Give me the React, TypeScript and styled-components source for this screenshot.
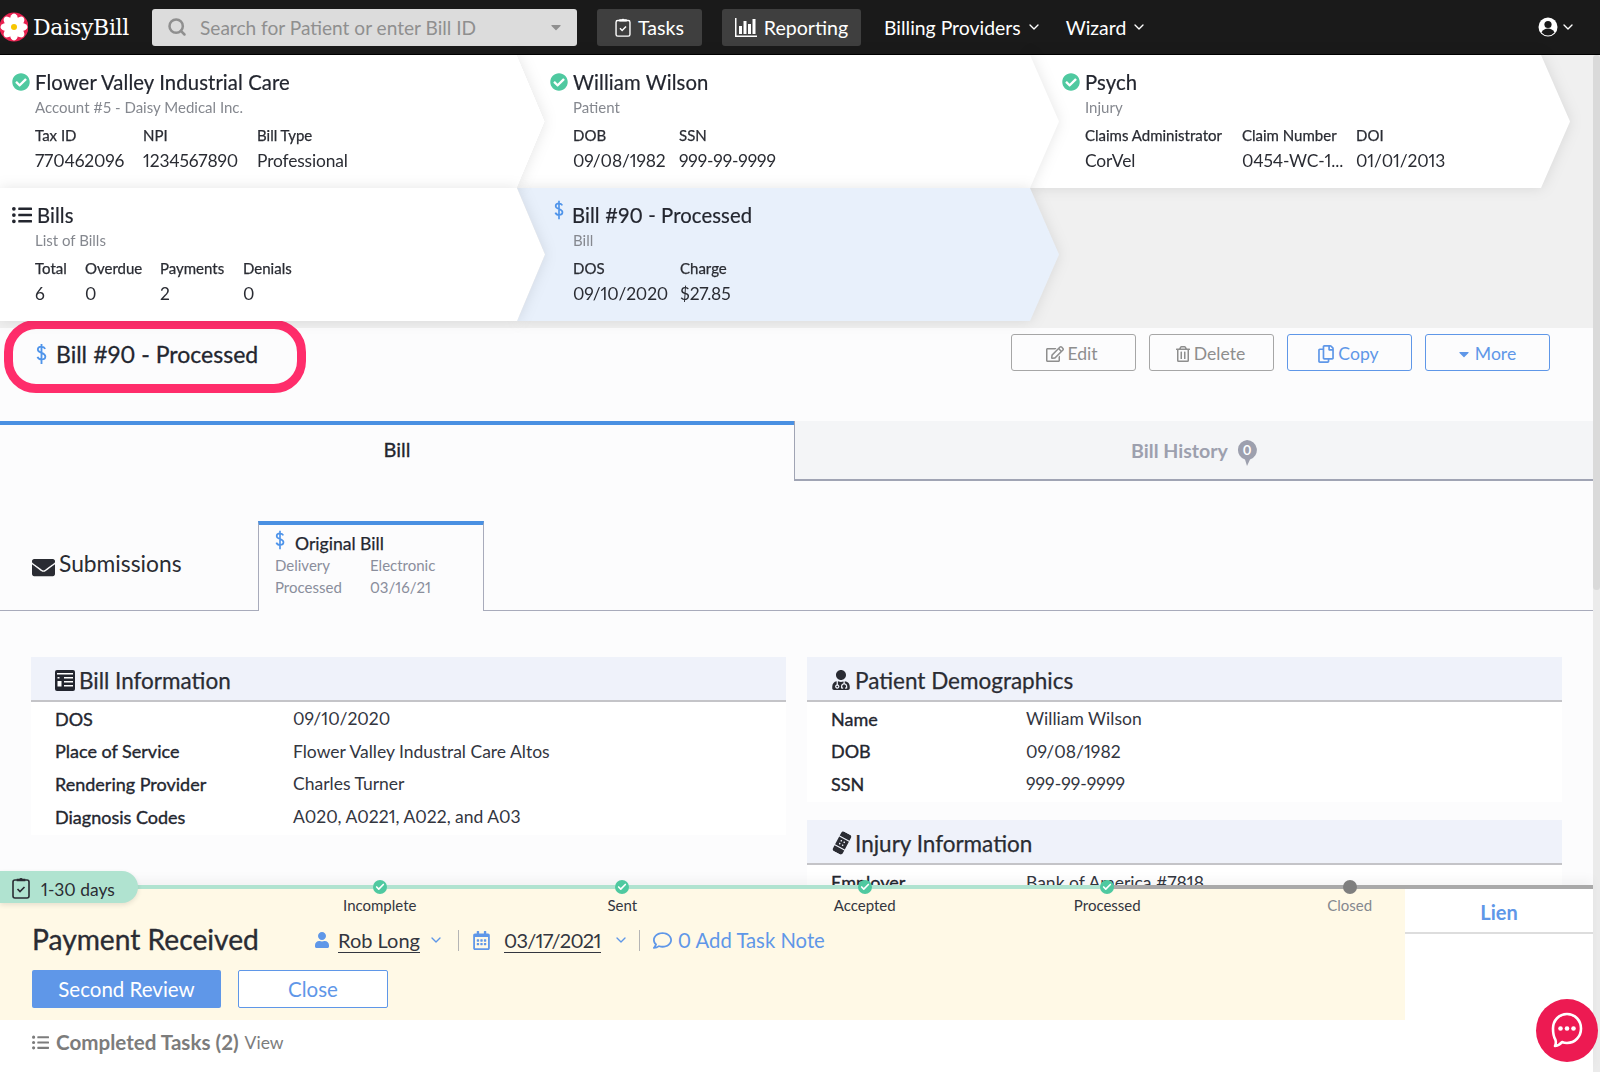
import React from "react";
import styled, { createGlobalStyle } from "styled-components";
import { Search, ChevronDown, Check } from "lucide-react";
import {
  FaCheckCircle, FaListUl, FaEnvelope, FaRegEdit, FaRegTrashAlt, FaRegCopy, FaCaretDown,
  FaUserMd, FaBandAid, FaUser, FaRegCalendarAlt, FaRegComment,
} from "react-icons/fa";

const Global = createGlobalStyle`
  html, body { margin: 0; padding: 0; background: #fcfcfd; }
  * { box-sizing: border-box; }
  body { font-family: "Lato", "Liberation Sans", sans-serif; color: #23262f; font-variant-numeric: proportional-nums; }
`;

const Page = styled.div`
  position: relative; width: 1600px; height: 1072px; overflow: hidden; background: #fcfcfd;
`;
const TopBar = styled.header`
  height: 55px; background: #1a1a1a; border-bottom: 1px solid #000; display: flex; align-items: center; color: #fff;
`;
const Brand = styled.div`
  display: flex; align-items: center; gap: 5px; width: 152px; flex: none;
  font-family: "DejaVu Serif", serif; font-size: 22px; letter-spacing: -0.3px;
`;
const SearchBox = styled.div`
  width: 425px; height: 37px; background: #dcdcdc; border-radius: 3px; display: flex; align-items: center;
  padding: 0 13px 0 15px; color: #8f8f8f; font-size: 19.1px; gap: 13px; flex: none;
`;
const Grow = styled.span` flex: 1; `;
const NavButton = styled.div<{ $w: number; $ml: number }>`
  width: ${(p) => p.$w}px; margin-left: ${(p) => p.$ml}px; height: 37px; background: #3f3f3f; border-radius: 3px; flex: none;
  display: flex; align-items: center; justify-content: center; gap: 7px; font-size: 19.6px;
`;
const NavLink = styled.div<{ $ml: number }>`
  margin-left: ${(p) => p.$ml}px; display: flex; align-items: center; gap: 5px; font-size: 19.4px; flex: none;
`;
const UserMenu = styled.div`
  margin-left: auto; margin-right: 24px; display: flex; align-items: center; gap: 2px;
`;

const Crumbs = styled.section`
  background: #f0f0f0; height: 273px; padding-bottom: 7px; display: flex; flex-direction: column;
`;
const CrumbRow = styled.div` display: flex; height: 133px; `;
const CrumbShadow = styled.div<{ $w: number; $ml: number; $z: number }>`
  width: ${(p) => p.$w}px; margin-left: ${(p) => p.$ml}px; flex: none; height: 100%; position: relative; z-index: ${(p) => p.$z};
  filter: drop-shadow(0 0 7px rgba(0, 0, 0, 0.1));
`;
const Crumb = styled.div<{ $first?: boolean; $active?: boolean }>`
  height: 100%; background: ${(p) => (p.$active ? "#e8f0fb" : "#fff")};
  clip-path: ${(p) =>
    p.$first
      ? "polygon(0 0, calc(100% - 28px) 0, 100% 50%, calc(100% - 28px) 100%, 0 100%)"
      : "polygon(0 0, calc(100% - 29px) 0, 100% 50%, calc(100% - 29px) 100%, 0 100%, 28px 50%)"};
  padding: 15px 0 0 ${(p) => (p.$first ? 12 : 33)}px;
`;
const CrumbTitle = styled.div`
  display: flex; align-items: center; height: 24px; font-size: 20.3px; gap: 5px; letter-spacing: 0.1px; color: #23262f;
  -webkit-text-stroke: 0.2px #23262f;
`;
const RaisedDollar = styled.span`
  display: flex; margin: -10px 3px 0 4px;
`;
const CrumbSub = styled.div`
  margin: 4px 0 0 23px; font-size: 15px; color: #85888f; line-height: 18px;
`;
const Facts = styled.div<{ $cols: string }>`
  margin: 10px 0 0 23px; display: grid; grid-template-columns: ${(p) => p.$cols};
`;
const FactLabel = styled.div`
  font-size: 15px; line-height: 19px; color: #2a2c33; -webkit-text-stroke: 0.25px #2a2c33;
`;
const FactValue = styled.div`
  font-size: 17.4px; line-height: 22px; margin-top: 5px; color: #2a2c33; white-space: nowrap; letter-spacing: -0.15px;
`;

const TitleBar = styled.div`
  position: relative; height: 93px; display: flex; justify-content: space-between; padding-right: 50px;
`;
const Ring = styled.div`
  position: absolute; left: 4px; top: -8px; width: 302px; height: 73px; border: 9px solid #ff2d6b; border-radius: 32px;
`;
const PageTitle = styled.h1`
  margin: 10px 0 0 36px; display: flex; align-items: center; gap: 9px; font-size: 23px; font-weight: 400; line-height: 32px; height: 32px;
  -webkit-text-stroke: 0.3px #23262f;
`;
const Actions = styled.div` display: flex; gap: 13px; padding-top: 6px; `;
const Action = styled.button<{ $blue?: boolean }>`
  width: 125px; height: 37px; background: transparent; border-radius: 3px; font: inherit; font-size: 17.6px;
  border: 1.5px solid ${(p) => (p.$blue ? "#5f97e8" : "#a6a6a6")}; color: ${(p) => (p.$blue ? "#5f97e8" : "#8e8e8e")};
  display: flex; align-items: center; justify-content: center; gap: 3px; padding: 2px 3px 0 0;
`;

const MainTabs = styled.div`
  display: grid; grid-template-columns: 794px 1fr; height: 60px; padding-right: 7px;
`;
const MainTab = styled.div<{ $active?: boolean }>`
  display: flex; align-items: center; justify-content: center; gap: 9px; font-size: ${(p) => (p.$active ? 20 : 19.6)}px;
  font-weight: ${(p) => (p.$active ? 400 : 700)};
  -webkit-text-stroke: ${(p) => (p.$active ? "0.3px #23262f" : "0")};
  color: ${(p) => (p.$active ? "#23262f" : "#9da0ae")};
  background: ${(p) => (p.$active ? "transparent" : "#f4f5f7")};
  border-top: ${(p) => (p.$active ? "4px solid #4a90e2" : "none")};
  border-bottom: ${(p) => (p.$active ? "none" : "2px solid #a0a4b4")};
  border-left: ${(p) => (p.$active ? "none" : "1px solid #a0a4b4")};
  padding-bottom: ${(p) => (p.$active ? 8 : 0)}px;
`;
const PinWrap = styled.span` display: flex; margin-top: 6px; `;

const SubTabs = styled.div`
  margin-top: 40px; height: 90px; border-bottom: 1px solid #a8abbb; display: flex; align-items: flex-end; margin-right: 7px;
`;
const Submissions = styled.div`
  width: 258px; height: 100%; display: flex; align-items: center; padding: 3px 0 0 32px; gap: 4px; font-size: 22.8px; color: #2a2c33;
`;
const SubmissionsText = styled.span` margin-top: -8px; `;
const SubTabCard = styled.div`
  width: 226px; height: 90px; margin-bottom: -1px; background: #fcfcfd; border-top: 4px solid #4a90e2; border-left: 1px solid #a8abbb;
  border-right: 1px solid #a8abbb; padding: 4px 0 0 16px;
`;
const CardTitle = styled.div`
  display: flex; align-items: center; gap: 10px; font-size: 17.6px; height: 25px; padding-top: 4px; -webkit-text-stroke: 0.25px #23262f;
`;
const CardDollar = styled.span` display: flex; margin-top: -7px; `;
const CardGrid = styled.div`
  display: grid; grid-template-columns: 95px 1fr; font-size: 15px; line-height: 22px; color: #8a8e9c;
`;

const Panels = styled.div`
  margin: 46px 38px 0 31px; display: grid; grid-template-columns: 755px 755px; gap: 21px;
`;
const Column = styled.div` display: flex; flex-direction: column; gap: 18px; `;
const Panel = styled.div` background: #fff; padding-bottom: 2px; `;
const PanelHead = styled.h2`
  margin: 0; height: 45px; background: #eff2fa; border-bottom: 2px solid #c4c4c8; display: flex; align-items: center; gap: 4px;
  padding: 3px 0 0 24px; font-size: 22.5px; font-weight: 400; color: #2a2c33; -webkit-text-stroke: 0.25px #2a2c33;
`;
const BandAidIcon = styled(FaBandAid)` transform: rotate(-62deg); margin-right: -2px; `;
const Rows = styled.div` padding-top: 0.5px; `;
const Row = styled.div<{ $label: number }>`
  display: grid; grid-template-columns: ${(p) => p.$label}px 1fr; height: 32.6px; align-items: center; padding-left: 24px; font-size: 17.5px; color: #33363f;
`;
const RowLabel = styled.span` font-size: 18px; color: #23262f; -webkit-text-stroke: 0.35px #23262f; `;

const Footer = styled.footer`
  position: absolute; left: 0; top: 885px; width: 1593px; height: 187px; background: #fff; box-shadow: 0 -6px 10px rgba(0,0,0,0.04);
`;
const Track = styled.div`
  height: 4px; background: linear-gradient(to right, #b0e3d0 0, #b0e3d0 1108px, #a9a9a9 1108px, #a9a9a9 100%);
`;
const Pill = styled.div`
  position: absolute; left: 0; top: -14px; width: 138px; height: 32px; background: #b0e3d0; border-radius: 0 16px 16px 0; display: flex; align-items: center;
  padding-left: 12px; gap: 11px; font-size: 17.4px; box-shadow: 0 2px 5px rgba(0,0,0,0.1); color: #2a2c33;
`;
const PillText = styled.span` margin-top: 4px; `;
const Steps = styled.div`
  position: absolute; left: 258.5px; top: -5px; display: flex;
`;
const Step = styled.div<{ $muted?: boolean }>`
  width: 242.5px; display: flex; flex-direction: column; align-items: center; gap: 2px; font-size: 15px; line-height: 18px;
  color: ${(p) => (p.$muted ? "#85888f" : "#33363f")};
`;
const Dot = styled.span<{ $grey?: boolean }>`
  width: 14px; height: 14px; border-radius: 50%; background: ${(p) => (p.$grey ? "#7f7f7f" : "#4fc9a0")}; display: flex; align-items: center; justify-content: center; color: #fff;
`;
const FooterBody = styled.div`
  display: grid; grid-template-columns: 1405px 1fr; height: 131px;
`;
const TaskPanel = styled.div`
  background: #fff9e6; padding: 35px 0 0 32px;
`;
const TaskHead = styled.div` display: flex; align-items: center; height: 32px; `;
const TaskName = styled.div` font-size: 28.2px; width: 282px; color: #2a2c33; margin-top: -2px; -webkit-text-stroke: 0.35px #2a2c33; `;
const Assignee = styled.div`
  display: flex; align-items: center; font-size: 20px; color: #33363f;
`;
const Under = styled.span<{ $ml: number; $ls?: number }>`
  border-bottom: 1px solid #33363f; line-height: 24px; margin-left: ${(p) => p.$ml}px; letter-spacing: ${(p) => p.$ls ?? 0}px;
`;
const Caret = styled(ChevronDown)<{ $ml: number }>` margin-left: ${(p) => p.$ml}px; `;
const Sep = styled.span<{ $ml: number }>` width: 1px; height: 21px; background: #b5b5b5; margin: 0 13px 0 ${(p) => p.$ml}px; `;
const TaskNote = styled.span`
  display: flex; align-items: center; gap: 6px; color: #5f97e8; font-size: 20.3px;
`;
const TaskButtons = styled.div` display: flex; gap: 17px; margin-top: 14px; `;
const PrimaryBtn = styled.button`
  width: 189px; height: 38px; background: #5f97e8; border: none; color: #fff; font: inherit; font-size: 20.5px; border-radius: 2px;
`;
const GhostBtn = styled.button`
  width: 150px; height: 38px; background: #fff; border: 1px solid #5f97e8; color: #5f97e8; font: inherit; font-size: 20.5px; border-radius: 2px;
`;
const LienPanel = styled.div` background: #fff; `;
const LienTab = styled.div`
  height: 45px; padding-top: 2px; border-bottom: 2px solid #ddd; display: flex; align-items: center; justify-content: center; color: #5f97e8; font-size: 20px; font-weight: 700;
`;
const Completed = styled.div`
  height: 44px; padding: 0 0 0 32px; display: flex; align-items: center; font-size: 20.6px; color: #7c7c7c;
`;
const CompletedTitle = styled.span` font-weight: 700; margin: 0 6px 0 7px; `;
const ViewLink = styled.span` font-size: 17.5px; `;
const ScrollTrack = styled.div`
  position: absolute; right: 0; top: 55px; bottom: 0; width: 7px; background: #ebebeb;
`;
const ScrollThumb = styled.div`
  height: 535px; background: #dadada; border-radius: 4px;
`;
const ChatBubble = styled.div`
  position: absolute; left: 1536px; top: 999px; width: 62px; height: 63px; border-radius: 50%; background: #ed1a52; display: flex; align-items: center; justify-content: center;
`;

const Flower = () => (
  <svg width="28" height="32" viewBox="0 0 28 32">
    <circle cx="14" cy="16" r="14.5" fill="#e8204f" />
    {[0, 45, 90, 135, 180, 225, 270, 315].map((a) => (
      <ellipse key={a} cx="14" cy="8.500" rx="4" ry="6" fill="#fff" transform={`rotate(${a} 14 16)`} />
    ))}
    <circle cx="14" cy="16" r="3" fill="#f7c600" />
  </svg>
);
const Dollar = ({ s = 24, w = 2 }: { s?: number; w?: number }) => (
  <svg width={s * 0.5} height={s} viewBox="0 0 12 24" fill="none" stroke="#4f94ea" strokeWidth={w}>
    <path d="M10 6.500C9 4.500 7.600 4 6 4 3.600 4 2 5.200 2 7.200c0 2 1.600 2.800 4 3.600 2.600.9 4.200 1.800 4.200 4 0 2.100-1.800 3.200-4.200 3.200-2 0-3.600-.8-4.400-2.800M6 1v22" />
  </svg>
);
const Bars = () => (
  <svg width="22" height="19" viewBox="0 0 22 19" fill="#fff">
    <rect x="0" y="0" width="1.500" height="19" />
    <rect x="0" y="17.500" width="22" height="1.500" />
    <rect x="4" y="8" width="3" height="8" />
    <rect x="8.500" y="3" width="3" height="13" />
    <rect x="13" y="6" width="3" height="10" />
    <rect x="17.500" y="1" width="3" height="15" />
  </svg>
);
const Clipboard = ({ c, w, h }: { c: string; w: number; h: number }) => (
  <svg width={w} height={h} viewBox="0 0 18 23" fill="none" stroke={c} strokeWidth="1.600">
    <rect x="1" y="4" width="16" height="18" rx="2" />
    <path d="M5.500 4.500V3.500h2.300a1.300 1.300 0 0 1 2.400 0h2.300v1z" fill={c} />
    <path d="M5.500 13l2.500 2.500 4.500-4.500" strokeWidth="1.700" />
  </svg>
);
const Ok = ({ s = 18 }: { s?: number }) => <FaCheckCircle size={s} color="#4fc9a0" />;
const Account = () => (
  <svg width="20" height="22" viewBox="0 0 20 22">
    <circle cx="10" cy="11" r="9.500" fill="#fff" />
    <circle cx="10" cy="8.500" r="3.600" fill="#1a1a1a" />
    <path d="M3.500 16.500c1.500-3 3.800-4 6.500-4s5 1 6.500 4a8.500 8.500 0 0 1-13 0z" fill="#1a1a1a" />
  </svg>
);
const BillIcon = () => (
  <svg width="20" height="21" viewBox="0 0 20 21">
    <rect width="20" height="21" rx="2" fill="#23262f" />
    <rect x="2" y="3" width="16" height="1.500" fill="#fff" />
    <rect x="9" y="7" width="9" height="1.500" fill="#fff" />
    <rect x="9" y="11" width="9" height="1.500" fill="#fff" />
    <rect x="9" y="15" width="9" height="1.500" fill="#fff" />
    <rect x="2.500" y="7" width="2" height="1.500" fill="#fff" />
    <rect x="2.500" y="11" width="4" height="5.500" fill="#fff" />
  </svg>
);
const Pin = () => (
  <svg width="20" height="26" viewBox="0 0 20 26">
    <path d="M10 0a10 10 0 0 1 3 19.500L10 26l-2-6.500A10 10 0 0 1 10 0z" fill="#9da0ae" />
    <text x="10" y="15" textAnchor="middle" fontSize="13" fontWeight="700" fill="#fff" fontFamily="Lato">0</text>
  </svg>
);
const ChatIcon = () => (
  <svg width="32" height="37" viewBox="0 0 32 37" fill="none">
    <path d="M16 2c8 0 14 6.500 14 14.500S24 31 16 31c-2 0-3.500-.3-5-1-1.500 2-4 3.500-7 4 1-2 1-4 .5-6C3 25.500 2 21 2 16.500 2 8.500 8 2 16 2z" stroke="#fff" strokeWidth="2.600" strokeLinejoin="round" />
    <circle cx="9.500" cy="16.500" r="2.300" fill="#fff" />
    <circle cx="16" cy="16.500" r="2.300" fill="#fff" />
    <circle cx="22.500" cy="16.500" r="2.300" fill="#fff" />
  </svg>
);

type Fact = [string, string];
const FactList = ({ items, cols }: { items: Fact[]; cols: string }) => (
  <Facts $cols={cols}>
    {items.map(([l, v]) => (
      <div key={l}>
        <FactLabel>{l}</FactLabel>
        <FactValue>{v}</FactValue>
      </div>
    ))}
  </Facts>
);

export default function App() {
  return (
    <Page>
      <Global />
      <TopBar>
        <Brand><Flower /> DaisyBill</Brand>
        <SearchBox>
          <Search size={20} color="#8f8f8f" strokeWidth={3} />
          <Grow>Search for Patient or enter Bill ID</Grow>
          <FaCaretDown size={16} />
        </SearchBox>
        <NavButton $w={105} $ml={20}><Clipboard c="#fff" w={16} h={20} /> Tasks</NavButton>
        <NavButton $w={139} $ml={20}><Bars /> Reporting</NavButton>
        <NavLink $ml={23}>Billing Providers <ChevronDown size={16} /></NavLink>
        <NavLink $ml={24}>Wizard <ChevronDown size={16} /></NavLink>
        <UserMenu><Account /><ChevronDown size={16} /></UserMenu>
      </TopBar>

      <Crumbs>
        <CrumbRow>
          <CrumbShadow $w={545} $ml={0} $z={3}>
            <Crumb $first>
              <CrumbTitle><Ok /> Flower Valley Industrial Care</CrumbTitle>
              <CrumbSub>Account #5 - Daisy Medical Inc.</CrumbSub>
              <FactList cols="108px 114px auto" items={[["Tax ID", "770462096"], ["NPI", "1234567890"], ["Bill Type", "Professional"]]} />
            </Crumb>
          </CrumbShadow>
          <CrumbShadow $w={542} $ml={-28} $z={2}>
            <Crumb>
              <CrumbTitle><Ok /> William Wilson</CrumbTitle>
              <CrumbSub>Patient</CrumbSub>
              <FactList cols="106px auto" items={[["DOB", "09/08/1982"], ["SSN", "999-99-9999"]]} />
            </Crumb>
          </CrumbShadow>
          <CrumbShadow $w={541} $ml={-30} $z={1}>
            <Crumb>
              <CrumbTitle><Ok /> Psych</CrumbTitle>
              <CrumbSub>Injury</CrumbSub>
              <FactList cols="157px 114px auto" items={[["Claims Administrator", "CorVel"], ["Claim Number", "0454-WC-1..."], ["DOI", "01/01/2013"]]} />
            </Crumb>
          </CrumbShadow>
        </CrumbRow>
        <CrumbRow>
          <CrumbShadow $w={545} $ml={0} $z={3}>
            <Crumb $first>
              <CrumbTitle><FaListUl size={20} /> Bills</CrumbTitle>
              <CrumbSub>List of Bills</CrumbSub>
              <FactList cols="50px 75px 83px auto" items={[["Total", "6"], ["Overdue", "0"], ["Payments", "2"], ["Denials", "0"]]} />
            </Crumb>
          </CrumbShadow>
          <CrumbShadow $w={542} $ml={-28} $z={2}>
            <Crumb $active>
              <CrumbTitle><RaisedDollar><Dollar s={20} /></RaisedDollar> Bill #90 - Processed</CrumbTitle>
              <CrumbSub>Bill</CrumbSub>
              <FactList cols="107px auto" items={[["DOS", "09/10/2020"], ["Charge", "$27.85"]]} />
            </Crumb>
          </CrumbShadow>
        </CrumbRow>
      </Crumbs>

      <TitleBar>
        <Ring />
        <PageTitle><Dollar s={22} /> Bill #90 - Processed</PageTitle>
        <Actions>
          <Action><FaRegEdit size={18} /> Edit</Action>
          <Action><FaRegTrashAlt size={16} /> Delete</Action>
          <Action $blue><FaRegCopy size={18} /> Copy</Action>
          <Action $blue><FaCaretDown size={16} /> More</Action>
        </Actions>
      </TitleBar>

      <MainTabs>
        <MainTab $active>Bill</MainTab>
        <MainTab>Bill History <PinWrap><Pin /></PinWrap></MainTab>
      </MainTabs>

      <SubTabs>
        <Submissions><FaEnvelope size={23} /> <SubmissionsText>Submissions</SubmissionsText></Submissions>
        <SubTabCard>
          <CardTitle><CardDollar><Dollar s={20} /></CardDollar> Original Bill</CardTitle>
          <CardGrid>
            <span>Delivery</span><span>Electronic</span>
            <span>Processed</span><span>03/16/21</span>
          </CardGrid>
        </SubTabCard>
      </SubTabs>

      <Panels>
        <Column>
          <Panel>
            <PanelHead><BillIcon /> Bill Information</PanelHead>
            <Rows>
              <Row $label={238}><RowLabel>DOS</RowLabel><span>09/10/2020</span></Row>
              <Row $label={238}><RowLabel>Place of Service</RowLabel><span>Flower Valley Industral Care Altos</span></Row>
              <Row $label={238}><RowLabel>Rendering Provider</RowLabel><span>Charles Turner</span></Row>
              <Row $label={238}><RowLabel>Diagnosis Codes</RowLabel><span>A020, A0221, A022, and A03</span></Row>
            </Rows>
          </Panel>
        </Column>
        <Column>
          <Panel>
            <PanelHead><FaUserMd size={20} /> Patient Demographics</PanelHead>
            <Rows>
              <Row $label={195}><RowLabel>Name</RowLabel><span>William Wilson</span></Row>
              <Row $label={195}><RowLabel>DOB</RowLabel><span>09/08/1982</span></Row>
              <Row $label={195}><RowLabel>SSN</RowLabel><span>999-99-9999</span></Row>
            </Rows>
          </Panel>
          <Panel>
            <PanelHead><BandAidIcon size={22} /> Injury Information</PanelHead>
            <Rows>
              <Row $label={195}><RowLabel>Employer</RowLabel><span>Bank of America #7818</span></Row>
            </Rows>
          </Panel>
        </Column>
      </Panels>

      <ScrollTrack><ScrollThumb /></ScrollTrack>

      <Footer>
        <Track />
        <Pill><Clipboard c="#2a2c33" w={18} h={23} /> <PillText>1-30 days</PillText></Pill>
        <Steps>
          {["Incomplete", "Sent", "Accepted", "Processed"].map((s) => (
            <Step key={s}><Dot><Check size={10} strokeWidth={4} /></Dot>{s}</Step>
          ))}
          <Step $muted><Dot $grey />Closed</Step>
        </Steps>
        <FooterBody>
          <TaskPanel>
            <TaskHead>
              <TaskName>Payment Received</TaskName>
              <Assignee>
                <FaUser size={16} color="#5f97e8" /><Under $ml={8}>Rob Long</Under>
                <Caret size={16} color="#5f97e8" $ml={8} />
              </Assignee>
              <Sep $ml={14} />
              <Assignee>
                <FaRegCalendarAlt size={19} color="#5f97e8" /><Under $ml={13} $ls={-0.7}>03/17/2021</Under>
                <Caret size={16} color="#5f97e8" $ml={12} />
              </Assignee>
              <Sep $ml={10} />
              <TaskNote><FaRegComment size={19} /> 0 Add Task Note</TaskNote>
            </TaskHead>
            <TaskButtons>
              <PrimaryBtn>Second Review</PrimaryBtn>
              <GhostBtn>Close</GhostBtn>
            </TaskButtons>
          </TaskPanel>
          <LienPanel><LienTab>Lien</LienTab></LienPanel>
        </FooterBody>
        <Completed>
          <FaListUl size={17} />
          <CompletedTitle>Completed Tasks (2)</CompletedTitle>
          <ViewLink>View</ViewLink>
        </Completed>
      </Footer>

      <ChatBubble><ChatIcon /></ChatBubble>
    </Page>
  );
}
